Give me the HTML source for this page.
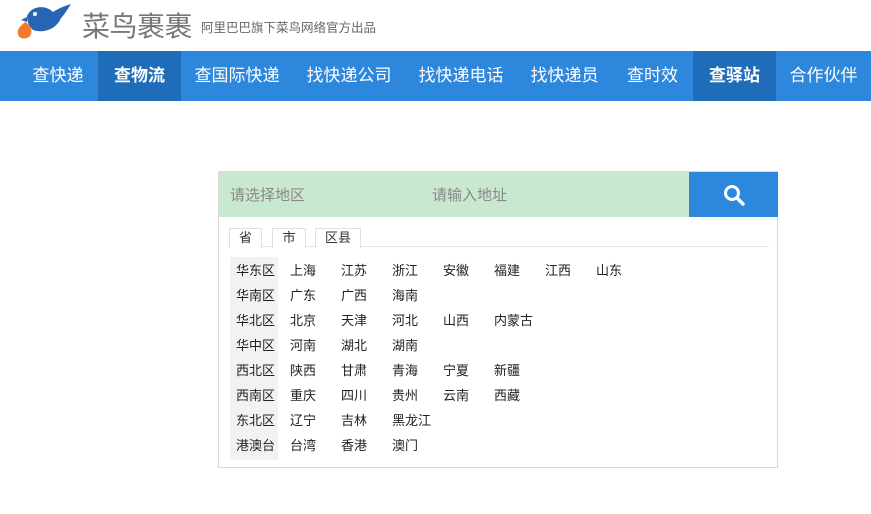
<!DOCTYPE html>
<html><head><meta charset="utf-8"><style>
*{margin:0;padding:0;box-sizing:border-box}
body{width:871px;height:514px;background:#fff;font-family:"Liberation Sans","Noto Sans CJK SC",sans-serif;position:relative;overflow:hidden}
.logo{position:absolute;left:82px;top:5px;font-size:28px;color:#777;letter-spacing:-0.5px}
.slogan{position:absolute;left:201px;top:17px;font-size:12.5px;color:#666}
.nav{position:absolute;left:0;top:51px;width:871px;height:50px;background:#2d87dc}
.nav span{position:absolute;top:0;height:50px;line-height:50px;text-align:center;color:#fff;font-size:17px}
.nav .a{background:#1f6cb8;font-weight:bold}
.box{position:absolute;left:218px;top:171px;width:560px;height:297px;border:1px solid #d8d8d8}
.bar{position:absolute;left:0;top:0;width:470px;height:45px;background:#c9e8d0}
.bar span{position:absolute;top:12px;font-size:15px;color:#888}
.btn{position:absolute;left:470px;top:0;width:89px;height:45px;background:#2d87dc}
.tabs{position:absolute;left:10px;top:56px;width:540px;height:19px;border-bottom:1px solid #e4e4e4}
.tabs span{position:absolute;top:0;height:20px;border:1px solid #e0e0e0;border-bottom:none;font-size:13px;line-height:18px;text-align:center;color:#333;background:#fff}
.col{position:absolute;left:11px;top:85px;width:48px;height:203px;background:#f2f2f2}
.r{position:absolute;font-size:13px;color:#222}
</style></head><body>
<svg style="position:absolute;left:15px;top:2px" width="60" height="40" viewBox="0 0 60 40">
<path d="M12 14 C16 4 30 2 38 10 C44 6 50 4 56 2 C52 8 50 12 46 16 C42 26 30 32 18 28 C14 24 12 20 12 14Z" fill="#2864b4"/>
<circle cx="20" cy="12" r="2" fill="#fff"/>
<path d="M6 18 L12 15 L12 20Z" fill="#2864b4"/>
<path d="M10 20 C14 22 18 26 16 32 C14 38 4 38 3 32 C2 26 6 24 10 20Z" fill="#f07a2a"/>
</svg>
<div class="logo">菜鸟裹裹</div>
<div class="slogan">阿里巴巴旗下菜鸟网络官方出品</div>
<div class="nav">
<span style="left:18px;width:80px">查快递</span>
<span class="a" style="left:98px;width:83px">查物流</span>
<span style="left:181px;width:112px">查国际快递</span>
<span style="left:293px;width:112px">找快递公司</span>
<span style="left:405px;width:112px">找快递电话</span>
<span style="left:517px;width:95px">找快递员</span>
<span style="left:612px;width:81px">查时效</span>
<span class="a" style="left:693px;width:83px">查驿站</span>
<span style="left:776px;width:95px">合作伙伴</span>
</div>
<div class="box">
<div class="bar"><span style="left:11px">请选择地区</span><span style="left:213px">请输入地址</span></div>
<div class="btn"><svg style="position:absolute;left:33px;top:11px" width="24" height="24" viewBox="0 0 24 24"><circle cx="10" cy="10" r="6.5" fill="none" stroke="#fff" stroke-width="3"/><path d="M15 15 L21 21" stroke="#fff" stroke-width="3.5" stroke-linecap="round"/></svg></div>
<div class="tabs"><span style="left:0;width:33px">省</span><span style="left:43px;width:34px">市</span><span style="left:86px;width:46px">区县</span></div>
<div class="col"></div>
<div class="r" style="left:17px;top:86px;line-height:25px">华东区<br>华南区<br>华北区<br>华中区<br>西北区<br>西南区<br>东北区<br>港澳台</div>
<div class="r" style="left:71px;top:86px;line-height:25px">上海<br>广东<br>北京<br>河南<br>陕西<br>重庆<br>辽宁<br>台湾</div>
<div class="r" style="left:122px;top:86px;line-height:25px">江苏<br>广西<br>天津<br>湖北<br>甘肃<br>四川<br>吉林<br>香港</div>
<div class="r" style="left:173px;top:86px;line-height:25px">浙江<br>海南<br>河北<br>湖南<br>青海<br>贵州<br>黑龙江<br>澳门</div>
<div class="r" style="left:224px;top:86px;line-height:25px">安徽<br><br>山西<br><br>宁夏<br>云南</div>
<div class="r" style="left:275px;top:86px;line-height:25px">福建<br><br>内蒙古<br><br>新疆<br>西藏</div>
<div class="r" style="left:326px;top:86px;line-height:25px">江西</div>
<div class="r" style="left:377px;top:86px;line-height:25px">山东</div>
</div>
</body></html>
